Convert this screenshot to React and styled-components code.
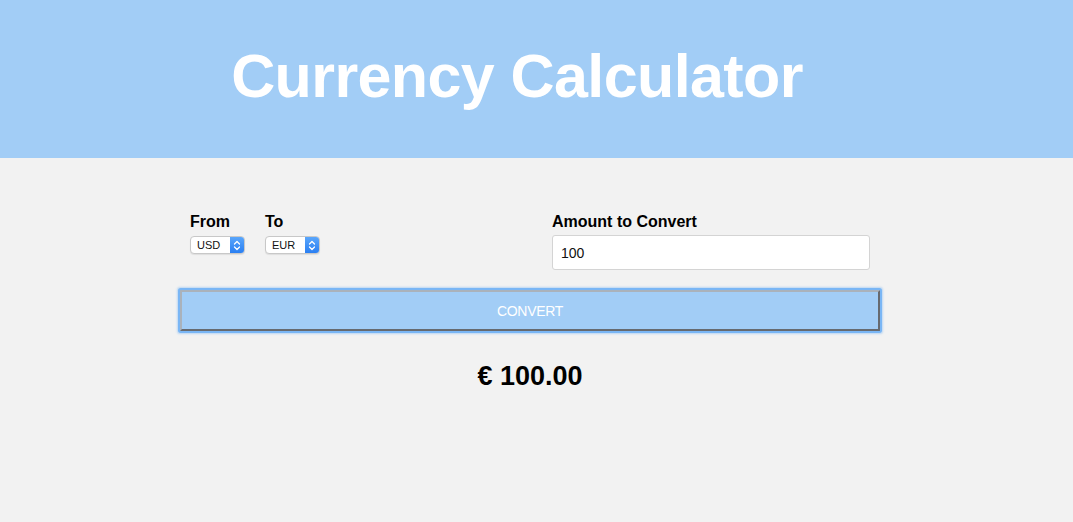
import React, { useState } from 'react';
import styled, { createGlobalStyle } from 'styled-components';

const GlobalStyle = createGlobalStyle`
    html, body {
        margin: 0;
        padding: 0;
        background-color: #f2f2f2;
        font-family: "Liberation Sans", Arial, Helvetica, sans-serif;
    }
`

const Header = styled.header`
    height: 158px;
    background-color: #a2cdf6;
    display: flex;
    align-items: center;
    justify-content: center;
    padding-right: 39px;
    padding-bottom: 6px;
    box-sizing: border-box;
`

const Title = styled.h1`
    margin: 0;
    color: #ffffff;
    font-size: 61px;
    font-weight: 700;
    line-height: 1;
    letter-spacing: -0.6px;
`

const Main = styled.main`
    width: 704px;
    margin: 0 0 0 178px;
    padding-top: 55px;
`

const Row = styled.div`
    display: flex;
    justify-content: space-between;
    padding: 0 12px;
`

const Pickers = styled.div`
    display: flex;
    gap: 20px;
`

const Field = styled.div`
    display: flex;
    flex-direction: column;
`

const Label = styled.label`
    font-size: 16px;
    font-weight: 700;
    color: #000;
    line-height: 18px;
    margin-bottom: ${props => props.$gap || 5}px;
`

const Select = styled.div`
    display: flex;
    align-items: stretch;
    width: 55px;
    height: 18px;
    box-sizing: border-box;
    border: 1px solid #c8c8c8;
    border-radius: 4px;
    background: #fff;
    overflow: hidden;
    box-shadow: 0 1px 1px rgba(0, 0, 0, 0.08);
`

const SelectText = styled.span`
    flex: 1;
    font-size: 11px;
    line-height: 16px;
    padding-left: 6px;
    color: #111;
`

const SelectArrow = styled.span`
    width: 14px;
    display: flex;
    align-items: center;
    justify-content: center;
    background: linear-gradient(#5aa6fb, #2a7ff2);
`

const AmountInput = styled.input`
    width: 318px;
    height: 35px;
    box-sizing: border-box;
    border: 1px solid #d4d4d4;
    border-radius: 3px;
    background: #fff;
    padding: 0 8px;
    font-family: inherit;
    font-size: 14px;
    color: #111;
    outline: none;
`

const ConvertButton = styled.button`
    display: block;
    width: 700px;
    height: 41px;
    margin: 20px 0 0 2px;
    box-sizing: border-box;
    background-color: #a2cdf6;
    border-style: solid;
    border-width: 2px;
    border-color: #aab2bb #666a70 #666a70 #aab2bb;
    border-radius: 1px;
    box-shadow: 0 0 0 2px #7ab6f5, 0 0 2px 3px rgba(122, 182, 245, 0.45);
    color: #fff;
    font-family: inherit;
    font-size: 14px;
    letter-spacing: -0.3px;
    cursor: pointer;
`

const Result = styled.div`
    margin-top: 30px;
    text-align: center;
    font-size: 27px;
    font-weight: 700;
    color: #000;
`

const Chevrons = () => (
    <svg width="8" height="11" viewBox="0 0 8 11" fill="none" stroke="#fff" strokeWidth="1.3" strokeLinecap="round" strokeLinejoin="round">
        <path d="M1.5 4 L4 1.5 L6.5 4" />
        <path d="M1.5 7 L4 9.5 L6.5 7" />
    </svg>
)

const CurrencySelect = ({ value }) => (
    <Select>
        <SelectText>{value}</SelectText>
        <SelectArrow><Chevrons /></SelectArrow>
    </Select>
)

const App = () => {
    const [amount, setAmount] = useState('100');
    return (
        <>
            <GlobalStyle />
            <Header>
                <Title>Currency Calculator</Title>
            </Header>
            <Main>
                <Row>
                    <Pickers>
                        <Field>
                            <Label>From</Label>
                            <CurrencySelect value="USD" />
                        </Field>
                        <Field>
                            <Label>To</Label>
                            <CurrencySelect value="EUR" />
                        </Field>
                    </Pickers>
                    <Field>
                        <Label $gap={4}>Amount to Convert</Label>
                        <AmountInput value={amount} onChange={e => setAmount(e.target.value)} />
                    </Field>
                </Row>
                <ConvertButton>CONVERT</ConvertButton>
                <Result>€ {Number(amount || 0).toFixed(2)}</Result>
            </Main>
        </>
    );
};

export default App;
